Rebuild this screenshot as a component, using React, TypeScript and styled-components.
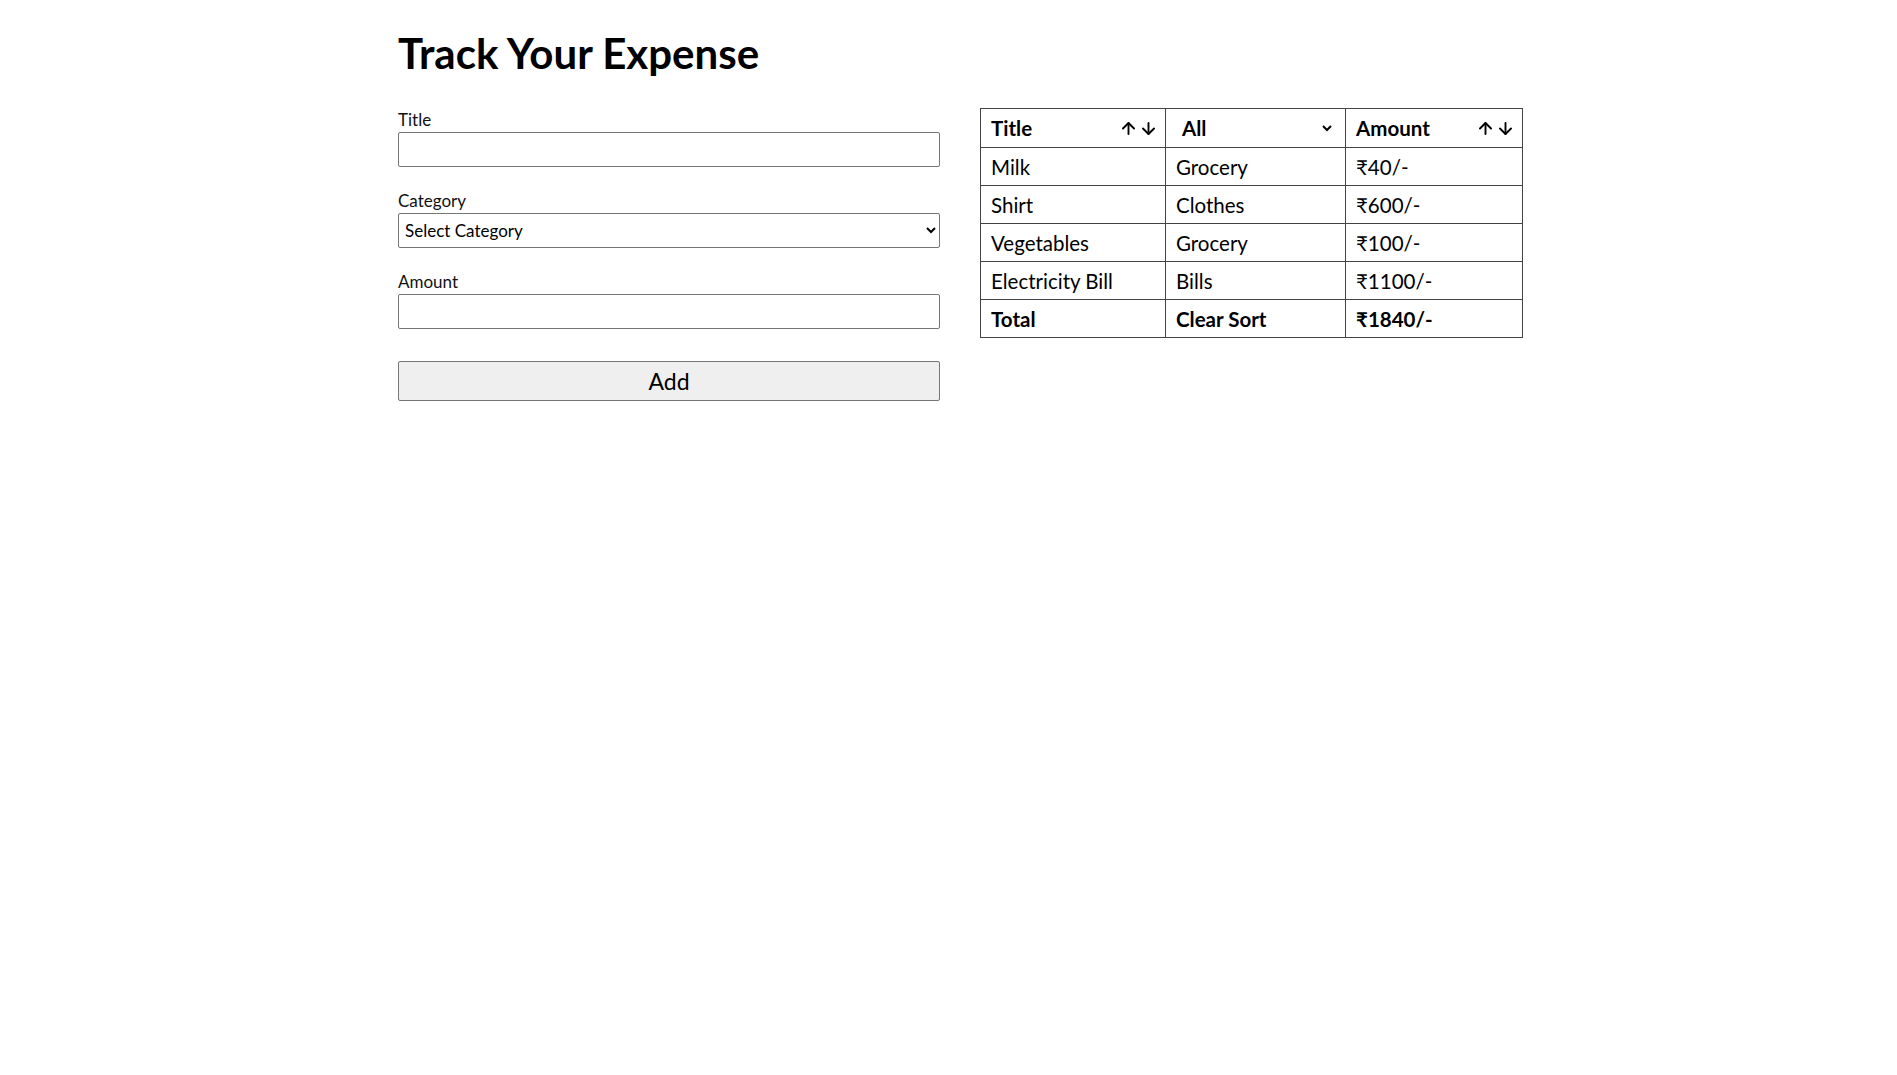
import styled, { createGlobalStyle } from "styled-components";
import { ArrowUp, ArrowDown } from "lucide-react";

const GlobalStyle = createGlobalStyle`
  body {
    margin: 0;
    background: #ffffff;
    color: #000000;
    font-family: Lato, "Noto Sans", "DejaVu Sans", sans-serif;
  }
`;

const Page = styled.main`
  padding: 29px 0 0 398px;
`;

const Heading = styled.h1`
  margin: 0 0 31px;
  font-size: 42px;
  line-height: 48px;
  font-weight: 700;
`;

const Content = styled.div`
  display: grid;
  grid-template-columns: 542px 542px;
  column-gap: 40px;
  align-items: start;
`;

const Form = styled.form`
  display: flex;
  flex-direction: column;
  gap: 22px;
`;

const Field = styled.div`
  display: flex;
  flex-direction: column;
`;

const Label = styled.label`
  font-size: 17px;
  line-height: 24px;
  color: #111;
`;

const Input = styled.input`
  box-sizing: border-box;
  height: 35px;
  width: 100%;
  border: 1px solid #767676;
  border-radius: 2px;
  padding: 0 6px;
  font: inherit;
  font-size: 16px;
`;

const Select = styled.select`
  box-sizing: border-box;
  height: 35px;
  width: 100%;
  border: 1px solid #767676;
  border-radius: 2px;
  padding: 0 2px;
  background: #fff;
  font: inherit;
  font-size: 17px;
  color: #000;
`;

const AddButton = styled.button`
  margin-top: 10px;
  height: 40px;
  width: 100%;
  border: 1px solid #767676;
  border-radius: 2px;
  background: #efefef;
  font: inherit;
  font-size: 23px;
  color: #000;
`;

const Table = styled.table`
  width: 542px;
  border-collapse: collapse;
  font-size: 20.5px;
  table-layout: fixed;
`;

const Th = styled.th`
  height: 38px;
  padding: 0 10px;
  border: 1px solid #444;
  text-align: left;
  font-weight: 700;
`;

const Td = styled.td<{ $bold?: boolean }>`
  height: 37px;
  padding: 0 10px;
  border: 1px solid #444;
  font-weight: ${(p) => (p.$bold ? 700 : 400)};
`;

const HeadCell = styled.div`
  display: flex;
  align-items: center;
  justify-content: space-between;
`;

const Arrows = styled.span`
  display: flex;
  gap: 1px;
  margin-right: -3px;
`;

const FilterSelect = styled.select`
  width: 100%;
  margin-top: -4px;
  border: none;
  outline: none;
  background: transparent;
  font: inherit;
  font-size: 20.5px;
  font-weight: 700;
  color: #000;
  padding: 0 0 0 2px;
`;

const expenses = [
  { title: "Milk", category: "Grocery", amount: 40 },
  { title: "Shirt", category: "Clothes", amount: 600 },
  { title: "Vegetables", category: "Grocery", amount: 100 },
  { title: "Electricity Bill", category: "Bills", amount: 1100 },
];

function SortArrows() {
  return (
    <Arrows>
      <ArrowUp size={19} strokeWidth={2.4} />
      <ArrowDown size={19} strokeWidth={2.4} />
    </Arrows>
  );
}

export default function App() {
  const total = expenses.reduce((s, e) => s + e.amount, 0);
  return (
    <>
      <GlobalStyle />
      <Page>
        <Heading>Track Your Expense</Heading>
        <Content>
          <Form onSubmit={(e) => e.preventDefault()}>
            <Field>
              <Label htmlFor="title">Title</Label>
              <Input id="title" />
            </Field>
            <Field>
              <Label htmlFor="category">Category</Label>
              <Select id="category" defaultValue="">
                <option value="" hidden>
                  Select Category
                </option>
                <option value="grocery">Grocery</option>
                <option value="clothes">Clothes</option>
                <option value="bills">Bills</option>
                <option value="education">Education</option>
                <option value="medicine">Medicine</option>
              </Select>
            </Field>
            <Field>
              <Label htmlFor="amount">Amount</Label>
              <Input id="amount" />
            </Field>
            <AddButton type="submit">Add</AddButton>
          </Form>
          <Table>
            <colgroup>
              <col style={{ width: 185 }} />
              <col style={{ width: 180 }} />
              <col style={{ width: 177 }} />
            </colgroup>
            <thead>
              <tr>
                <Th>
                  <HeadCell>
                    Title
                    <SortArrows />
                  </HeadCell>
                </Th>
                <Th>
                  <FilterSelect defaultValue="">
                    <option value="">All</option>
                    <option value="grocery">Grocery</option>
                    <option value="clothes">Clothes</option>
                    <option value="bills">Bills</option>
                  </FilterSelect>
                </Th>
                <Th>
                  <HeadCell>
                    Amount
                    <SortArrows />
                  </HeadCell>
                </Th>
              </tr>
            </thead>
            <tbody>
              {expenses.map((e) => (
                <tr key={e.title}>
                  <Td>{e.title}</Td>
                  <Td>{e.category}</Td>
                  <Td>₹{e.amount}/-</Td>
                </tr>
              ))}
              <tr>
                <Td $bold>Total</Td>
                <Td $bold>Clear Sort</Td>
                <Td $bold>₹{total}/-</Td>
              </tr>
            </tbody>
          </Table>
        </Content>
      </Page>
    </>
  );
}
